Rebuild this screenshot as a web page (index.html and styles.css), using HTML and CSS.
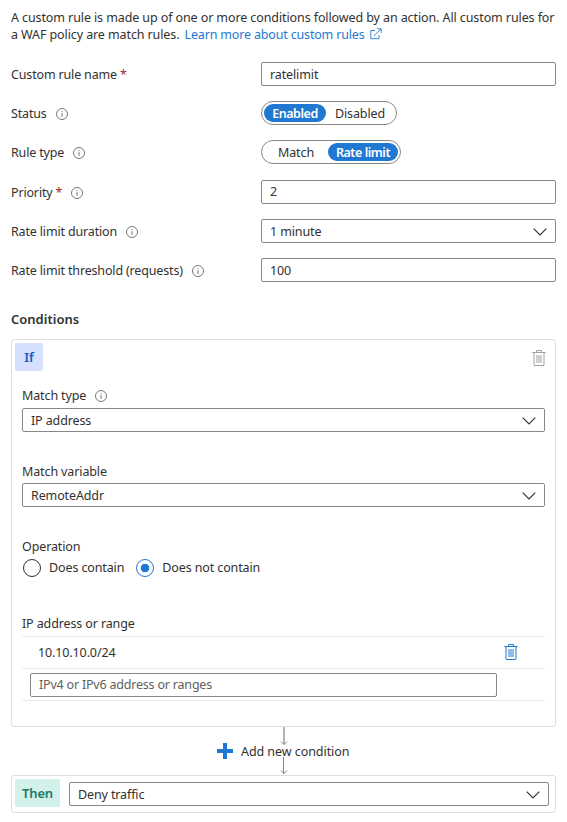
FILE: index.html
```html
<!DOCTYPE html>
<html lang="en">
<head>
<meta charset="utf-8">
<title>Custom rule</title>
<link rel="stylesheet" href="styles.css">
</head>
<body>
<svg class="defs" width="0" height="0">
  <symbol id="info" viewBox="0 0 12 12"><circle cx="6" cy="6" r="5.5" fill="none" stroke="#605e5c" stroke-width=".85"/><path d="M6 5.2V8.8M6 3.1V4.2" stroke="#605e5c" stroke-width=".9"/></symbol>
  <symbol id="chevron" viewBox="0 0 14 8"><path d="M.7.7 7 7 13.3.7" fill="none" stroke="#323130" stroke-width="1.15"/></symbol>
  <symbol id="trash" viewBox="0 0 14 16"><path d="M4.5 2V.6H9.5V2" fill="none" stroke="currentColor"/><path d="M2 3V15M12 3V15" stroke="currentColor" stroke-width="2" opacity=".5"/><path d="M.3 2.5H13.7M2 15.5H12" stroke="currentColor"/><path d="M4 5h6v8H4z" fill="currentColor" opacity=".5"/></symbol>
</svg>
<main class="page">
  <p class="intro"><span>A custom rule is made up of one or more conditions followed by an action. All custom rules for</span><br><span>a WAF policy are match rules.</span> <a class="link">Learn more about custom rules<svg class="external" viewBox="0 0 12 12"><path d="M5 2.5H.8V10.7H9V7M3.8 8 11 1M7.2.8H11.2V4.8" fill="none" stroke="currentColor" stroke-width=".9"/></svg></a></p>

  <div class="form">
    <div class="row"><label>Custom rule name <b class="req">*</b></label><div class="field">ratelimit</div></div>
    <div class="row"><label>Status<svg class="info"><use href="#info"/></svg></label><div class="pill status"><span class="on">Enabled</span><span>Disabled</span></div></div>
    <div class="row type-row"><label>Rule type<svg class="info"><use href="#info"/></svg></label><div class="pill type"><span>Match</span><span class="on">Rate limit</span></div></div>
    <div class="row"><label>Priority <b class="req">*</b><svg class="info"><use href="#info"/></svg></label><div class="field raised">2</div></div>
    <div class="row"><label>Rate limit duration<svg class="info"><use href="#info"/></svg></label><div class="field">1 minute<svg class="chevron"><use href="#chevron"/></svg></div></div>
    <div class="row"><label>Rate limit threshold (requests)<svg class="info"><use href="#info"/></svg></label><div class="field">100</div></div>
  </div>

  <h2>Conditions</h2>
  <section class="card">
    <div class="card-head"><span class="tag if">If</span><svg class="trash muted"><use href="#trash"/></svg></div>
    <div class="group match-type"><label>Match type<svg class="info"><use href="#info"/></svg></label><div class="field">IP address<svg class="chevron"><use href="#chevron"/></svg></div></div>
    <div class="group match-variable"><label>Match variable</label><div class="field">RemoteAddr<svg class="chevron"><use href="#chevron"/></svg></div></div>
    <div class="group operation"><label>Operation</label>
      <div class="radios"><span class="radio"><i></i><span>Does contain</span></span><span class="radio checked"><i></i><span>Does not contain</span></span></div>
    </div>
    <div class="group range"><label>IP address or range</label>
      <div class="ip-row"><span>10.10.10.0/24</span><svg class="trash"><use href="#trash"/></svg></div>
      <div class="ip-row entry"><div class="field placeholder">IPv4 or IPv6 address or ranges</div></div>
    </div>
  </section>

  <div class="connector">
    <svg class="arrows" viewBox="0 0 8 48"><path d="M4 0V17" stroke="#b5b3b1" stroke-width="2"/><path d="M1 14.5 4 17.5 7 14.5M1 43.5 4 46.5 7 43.5" fill="none" stroke="#8a8886"/><path d="M3.5 30V47" stroke="#8a8886"/></svg>
    <svg class="plus" viewBox="0 0 16 16"><path d="M8 0V16M0 8H16" stroke="#1f78d1" stroke-width="4"/></svg><span>Add new condition</span>
  </div>

  <section class="then-card"><span class="tag then">Then</span><div class="field">Deny traffic<svg class="chevron"><use href="#chevron"/></svg></div></section>
</main>
</body>
</html>
```
FILE: styles.css
```css
* { box-sizing: border-box; }
body { margin: 0; background: #fff; color: #323130; font: 12.5px/16px "Noto Sans", "Open Sans", sans-serif; letter-spacing: -.12px; }
.defs { position: absolute; }
.page { width: 567px; height: 822px; padding: 9px 11px 0; overflow: hidden; }
.intro { margin: 0; height: 53px; line-height: 17px; white-space: nowrap; letter-spacing: -.1px; }
.link { color: #1f78d1; margin-left: 2px; letter-spacing: -.17px; }
.external { width: 12px; height: 12px; margin-left: 5px; vertical-align: -1px; }
.row { display: grid; grid-template-columns: 250px 295px; height: 39px; align-items: start; }
.type-row { height: 40px; }
.row label { display: flex; align-items: center; height: 26px; white-space: pre; letter-spacing: -.16px; }
.req { color: #a4262c; font-weight: 400; }
.info { width: 12px; height: 12px; margin-left: 9px; flex: none; }
.field { display: flex; align-items: center; justify-content: space-between; height: 24px; padding: 1px 8px 0; border: 1px solid #8a8886; border-radius: 2px; white-space: nowrap; }
.raised { padding: 0 8px 1px; }
.chevron { width: 14px; height: 8px; flex: none; }
.pill { display: flex; height: 24px; padding: 2px; border: 1px solid #8a8886; border-radius: 12px; }
.status { width: 136px; }
.type { width: 140px; }
.pill span { flex: 1; display: flex; align-items: center; justify-content: center; height: 18px; padding-top: 2px; border-radius: 9px; white-space: nowrap; }
.pill .on { color: #fff; background: #1f78d1; font-weight: 600; letter-spacing: -.45px; }
.status .on { flex: 0 0 62px; }
.type .on { flex: 0 0 70px; }
h2 { margin: 14px 0 12px; font-size: 13px; line-height: 16px; font-weight: 600; letter-spacing: 0; }
.card { height: 388px; border: 1px solid #e1dfdd; border-radius: 3px; padding: 3px 10px 0; }
.card-head { display: flex; justify-content: space-between; height: 28px; margin-left: -7px; }
.tag { display: flex; align-items: center; justify-content: center; height: 28px; border-radius: 2px; font-size: 13px; font-weight: 600; }
.if { width: 28px; background: #d5e0fd; color: #185abd; }
.trash { width: 14px; height: 16px; color: #1f78d1; }
.muted { margin: 7px -1px 0 0; color: #a3a19f; }
.group label { display: flex; align-items: center; height: 16px; }
.match-type { margin-top: 17px; }
.match-type .field { margin-top: 4px; }
.match-variable { margin-top: 32px; }
.match-variable .field { margin-top: 3px; }
.operation { margin-top: 32px; }
.radios { display: flex; gap: 11px; margin-top: 3px; }
.radio { display: flex; align-items: center; gap: 8px; height: 20px; padding-left: 1px; }
.radio i { width: 18px; height: 18px; border: 1px solid #323130; border-radius: 50%; }
.checked i { border-color: #1f78d1; background: radial-gradient(circle, #1f78d1 0 4px, #fff 4.6px); }
.range { margin-top: 36px; }
.range label { height: 22px; padding-bottom: 3px; }
.ip-row { display: flex; align-items: center; justify-content: space-between; height: 32px; padding: 0 27px 0 16px; border-top: 1px solid #edebe9; }
.ip-row .trash { margin-top: -1px; }
.entry { height: 33px; padding: 0 8px; border-bottom: 1px solid #edebe9; }
.entry .field { width: 467px; padding-top: 0; }
.placeholder { color: #605e5c; letter-spacing: -.2px; }
.connector { position: relative; display: flex; align-items: center; gap: 8px; height: 48px; padding-left: 206px; }
.connector span { position: relative; padding-top: 1px; letter-spacing: -.06px; }
.plus { width: 16px; height: 16px; }
.arrows { position: absolute; left: 269px; top: 0; width: 8px; height: 48px; }
.then-card { display: flex; gap: 9px; height: 38px; padding: 3px 6px 0 3px; border: 1px solid #e1dfdd; border-radius: 3px; }
.then { width: 45px; background: #d1f1ea; color: #217867; }
.then-card .field { flex: 1; margin-top: 3px; }
```
